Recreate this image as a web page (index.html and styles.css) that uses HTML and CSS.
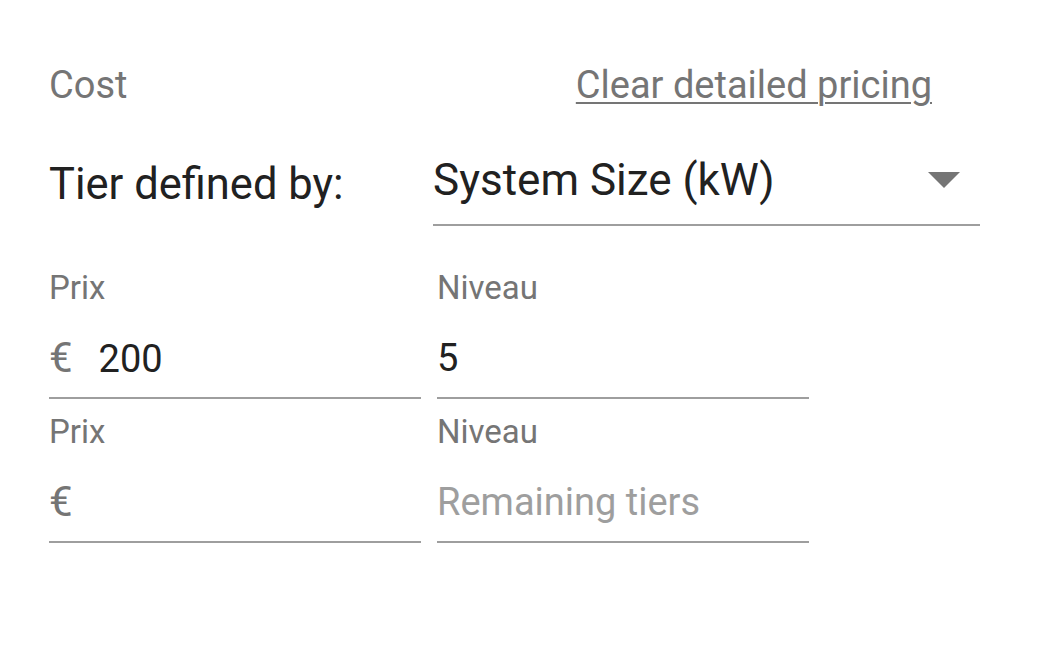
FILE: index.html
```html
<!DOCTYPE html>
<html lang="fr">
<head>
    <meta charset="UTF-8">
    <meta name="viewport" content="width=device-width, initial-scale=1.0">
    <title>Cost</title>
    <link rel="stylesheet" href="styles.css">
</head>
<body>
    <div class="pricing">
        <div class="pricing-header">
            <span class="section-title">Cost</span>
            <a href="#" class="clear-link">Clear detailed pricing</a>
        </div>

        <div class="tier-row">
            <span class="tier-label">Tier defined by:</span>
            <div class="select">
                <span class="select-value">System Size (kW)</span>
                <span class="select-arrow"></span>
            </div>
        </div>

        <div class="tier-fields">
            <div class="field">
                <label class="field-label">Prix</label>
                <div class="field-input">
                    <span class="adornment">€</span>
                    <span class="value">200</span>
                </div>
            </div>
            <div class="field">
                <label class="field-label">Niveau</label>
                <div class="field-input">
                    <span class="value">5</span>
                </div>
            </div>
        </div>

        <div class="tier-fields">
            <div class="field">
                <label class="field-label">Prix</label>
                <div class="field-input">
                    <span class="adornment">€</span>
                    <span class="value"></span>
                </div>
            </div>
            <div class="field">
                <label class="field-label">Niveau</label>
                <div class="field-input">
                    <span class="value placeholder">Remaining tiers</span>
                </div>
            </div>
        </div>
    </div>
</body>
</html>
```

FILE: styles.css
```css
body {
    margin: 0;
    background-color: #fff;
    font-family: Roboto, "Noto Sans", Arial, sans-serif;
    color: #212121;
}
.pricing {
    width: 931px;
    padding: 65px 0 0 49px;
}
.pricing-header {
    display: flex;
    justify-content: space-between;
    align-items: baseline;
    padding-right: 48px;
    font-size: 38px;
    line-height: 40px;
    color: #757575;
}
.clear-link {
    color: #757575;
    text-decoration: underline;
    text-decoration-thickness: 2px;
    text-underline-offset: 4px;
}
.tier-row {
    display: flex;
    align-items: flex-start;
    margin-top: 45px;
}
.tier-label {
    width: 384px;
    margin-top: 9px;
    font-size: 43.5px;
    line-height: 52px;
}
.select {
    flex: 1;
    display: flex;
    align-items: center;
    justify-content: space-between;
    padding: 4px 20px 18px 0;
    border-bottom: 2px solid #9e9e9e;
}
.select-value {
    font-size: 44px;
    line-height: 52px;
}
.select-arrow {
    width: 0;
    height: 0;
    border-left: 16px solid transparent;
    border-right: 16px solid transparent;
    border-top: 16px solid #757575;
}
.tier-fields {
    display: flex;
    gap: 16px;
    margin-top: 43px;
}
.tier-fields + .tier-fields {
    margin-top: 14px;
}
.field {
    width: 372px;
}
.field-label {
    display: block;
    font-size: 33px;
    line-height: 38px;
    color: #757575;
}
.field-input {
    display: flex;
    align-items: baseline;
    height: 44px;
    margin-top: 29px;
    padding-bottom: 17px;
    border-bottom: 2px solid #9e9e9e;
    font-size: 38px;
    line-height: 44px;
}
.adornment {
    margin-right: 26px;
    font-size: 42px;
    color: #757575;
}
.placeholder {
    color: #9e9e9e;
}
```
